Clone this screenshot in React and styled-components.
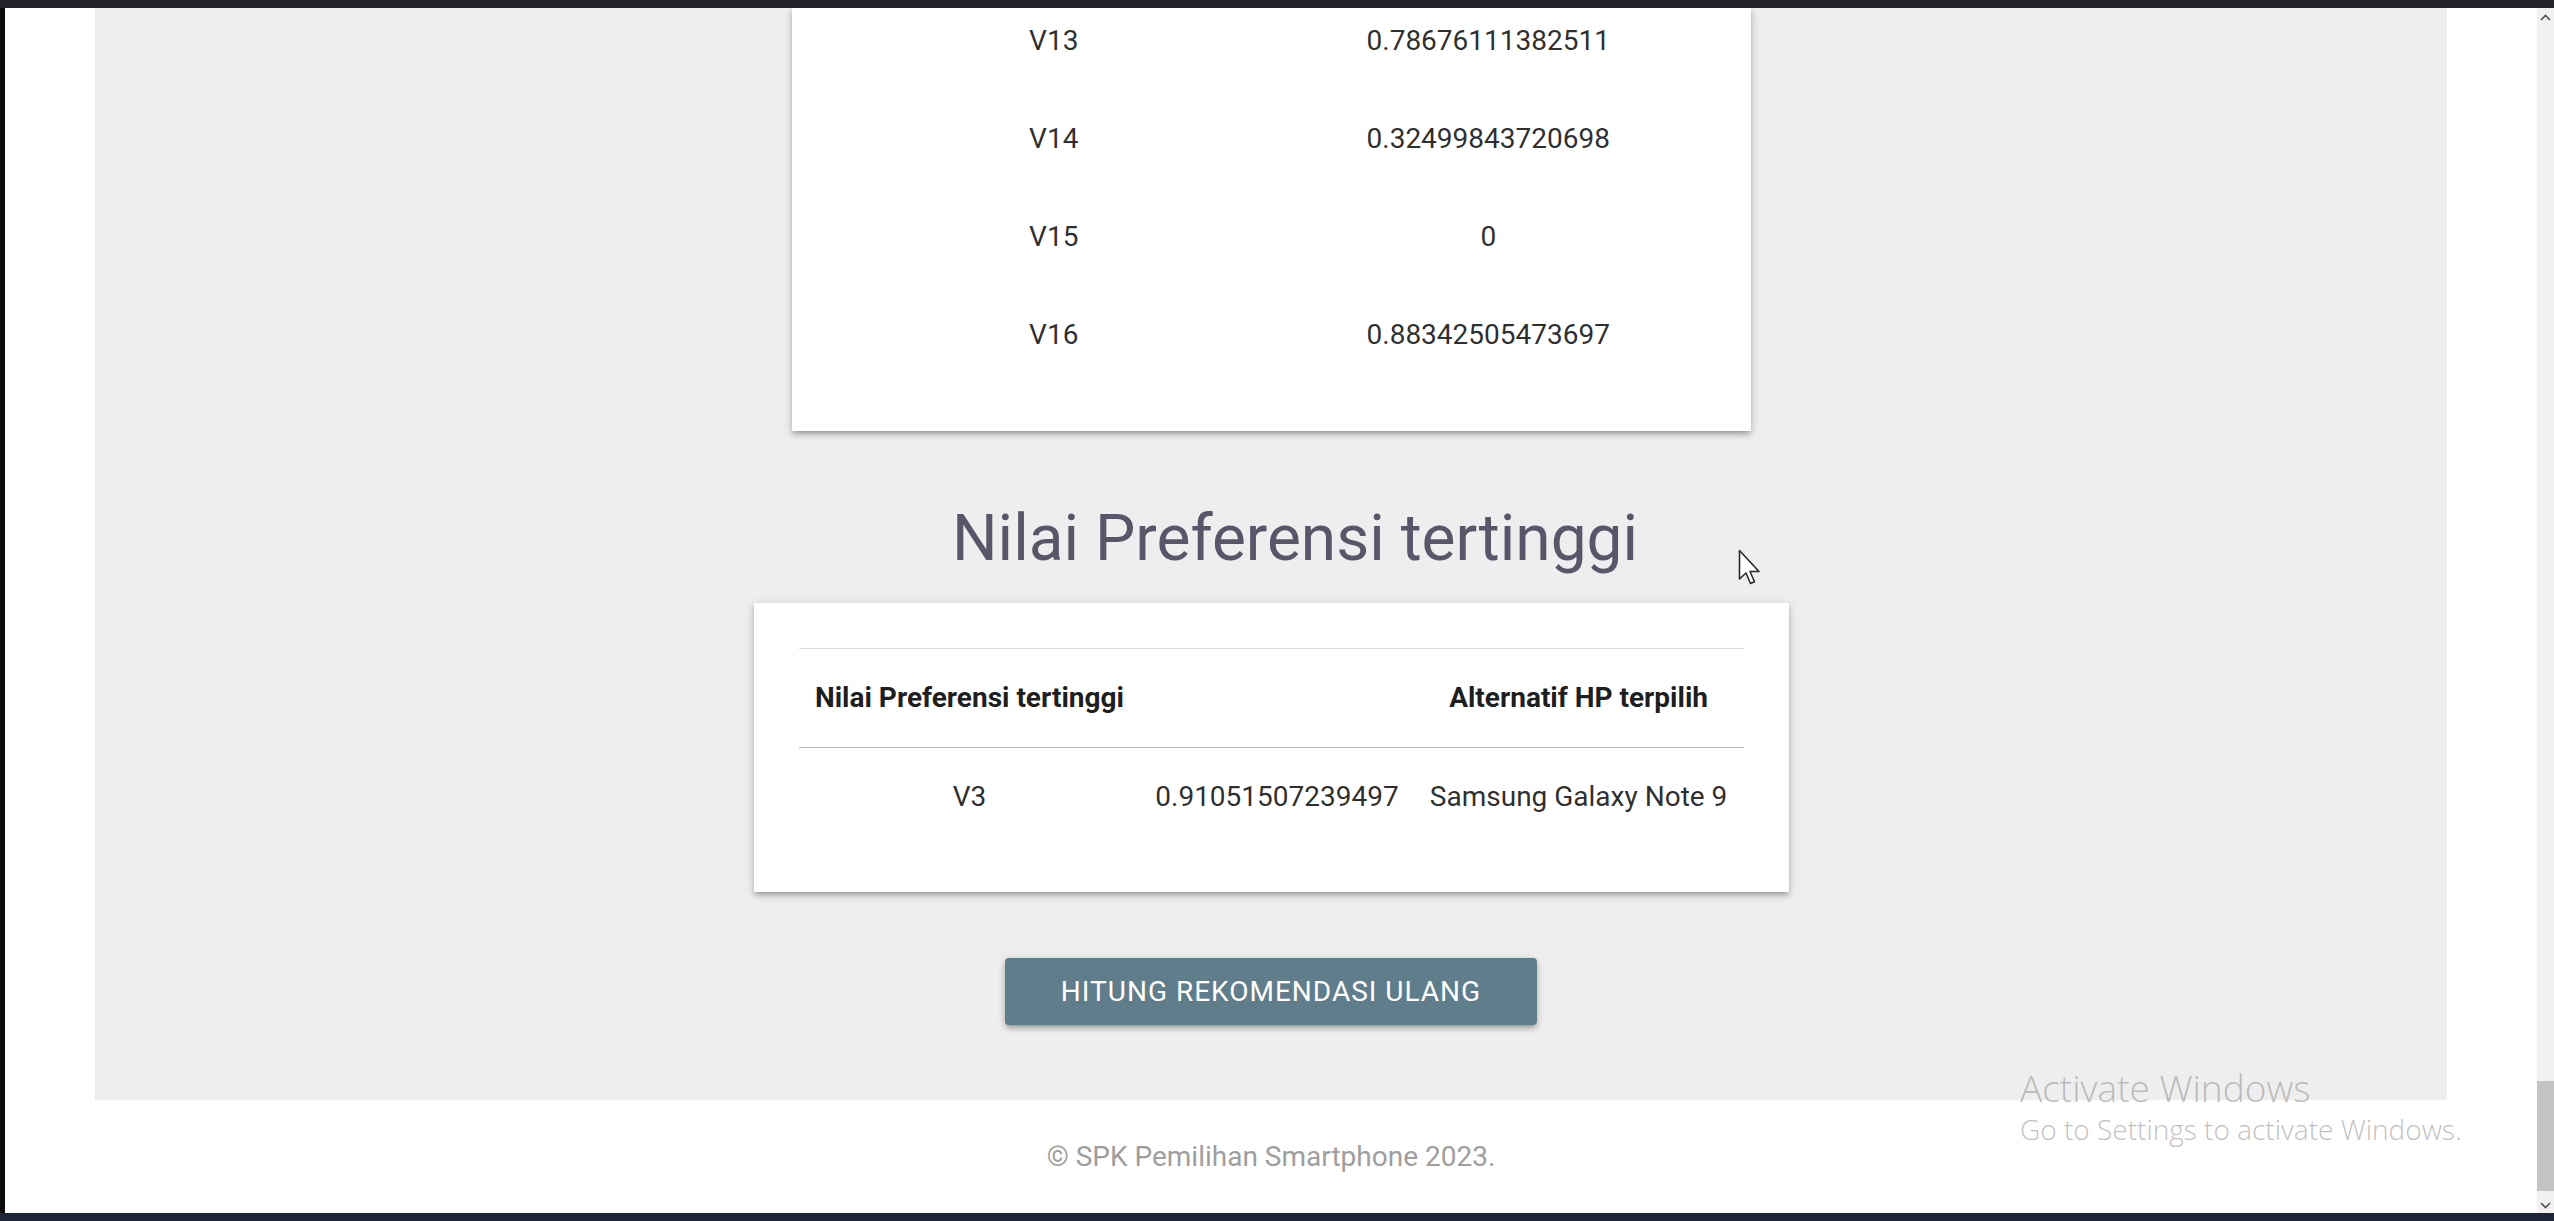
import React from 'react';
import styled, { createGlobalStyle } from 'styled-components';

const GlobalStyle = createGlobalStyle`
  html, body {
    margin: 0;
    padding: 0;
    background: #ffffff;
    overflow: hidden;
  }
  body {
    font-family: Roboto, "Liberation Sans", Arial, sans-serif;
  }
  * {
    box-sizing: border-box;
  }
`;

const Frame = styled.div`
  position: relative;
  width: 2554px;
  height: 1221px;
  display: flex;
  flex-direction: column;
  overflow: hidden;
`;

const TopBar = styled.div`
  height: 8px;
  flex: none;
  background: #232328;
`;

const BottomBar = styled.div`
  height: 8px;
  flex: none;
  background: #1c2636;
`;

const Middle = styled.div`
  flex: 1;
  display: flex;
  min-height: 0;
`;

const LeftEdge = styled.div`
  width: 5px;
  flex: none;
  background: #0b0b0d;
`;

const Page = styled.div`
  flex: 1;
  display: flex;
  flex-direction: column;
  background: #ffffff;
  min-width: 0;
`;

const Main = styled.main`
  margin: 0 90px;
  height: 1092px;
  background: #eeeeee;
  display: flex;
  flex-direction: column;
  align-items: center;
  overflow: hidden;
`;

const Card = styled.div`
  width: ${({ width }) => width}px;
  background: #ffffff;
  padding: ${({ clipped }) => (clipped ? '0 45px 47px' : '45px 45px 46px')};
  box-shadow: 0 4px 4px 0 rgba(0, 0, 0, 0.14), 0 5px 2px -4px rgba(0, 0, 0, 0.12),
    0 2px 9px 0 rgba(0, 0, 0, 0.2);
  flex: none;
`;

const Table = styled.table`
  width: 100%;
  border-collapse: collapse;
  table-layout: ${({ fixed }) => (fixed ? 'fixed' : 'auto')};
  font-size: 28px;
  line-height: 42px;
  color: rgba(0, 0, 0, 0.84);
`;

const Cell = styled.td`
  padding: ${({ first }) => (first ? '12px 9px 28px' : '28px 9px')};
  text-align: center;
  vertical-align: middle;
`;

const HeadRow = styled.tr`
  border-top: 1px solid rgba(0, 0, 0, 0.14);
  border-bottom: 1px solid rgba(0, 0, 0, 0.14);
`;

const HeadCell = styled.th`
  padding: 28px 9px;
  text-align: center;
  font-weight: 700;
  white-space: nowrap;
  color: rgba(0, 0, 0, 0.9);
`;

const Heading = styled.h4`
  margin: 71px 0 28px;
  padding-left: 48px;
  font-size: 64px;
  font-weight: 400;
  line-height: 73px;
  color: #59566a;
  white-space: nowrap;
`;

const Button = styled.button`
  margin-top: 66px;
  height: 67px;
  padding: 0 56px;
  border: none;
  border-radius: 4px;
  background: #607d8b;
  color: #ffffff;
  font-family: Roboto, "Liberation Sans", Arial, sans-serif;
  font-size: 28px;
  letter-spacing: 1px;
  text-transform: uppercase;
  box-shadow: 0 4px 4px 0 rgba(0, 0, 0, 0.14), 0 5px 2px -4px rgba(0, 0, 0, 0.12),
    0 2px 9px 0 rgba(0, 0, 0, 0.2);
  cursor: pointer;
  flex: none;
`;

const Footer = styled.footer`
  flex: 1;
  display: flex;
  align-items: center;
  justify-content: center;
  color: #9e9e9e;
  font-size: 28px;
`;

const Scrollbar = styled.div`
  width: 17px;
  flex: none;
  background: #f1f1f1;
  display: flex;
  flex-direction: column;
  justify-content: space-between;
  align-items: center;
  padding: 6px 0 4px;
`;

const ScrollTrack = styled.div`
  flex: 1;
  width: 100%;
  display: flex;
  flex-direction: column;
  justify-content: flex-end;
  padding: 0 0 11px;
`;

const Thumb = styled.div`
  height: 110px;
  width: 100%;
  background: #c4c4c4;
`;

const Watermark = styled.div`
  position: absolute;
  left: 2020px;
  top: 1066px;
  font-family: "Open Sans", "Noto Sans", sans-serif;
  font-weight: 300;
  color: rgba(150, 150, 150, 0.6);
  line-height: 1.2;
  pointer-events: none;
`;

const WatermarkTitle = styled.div`
  font-size: 37px;
`;

const WatermarkText = styled.div`
  font-size: 28px;
  margin-top: 3px;
`;

const Pointer = styled.svg`
  position: absolute;
  left: 1738px;
  top: 549px;
`;

const rows = [
  ['V13', '0.78676111382511'],
  ['V14', '0.32499843720698'],
  ['V15', '0'],
  ['V16', '0.88342505473697'],
];

const Chevron = ({ up }) => (
  <svg width="11" height="7" viewBox="0 0 11 7">
    <polyline
      points={up ? '1,6 5.5,1.5 10,6' : '1,1 5.5,5.5 10,1'}
      fill="none"
      stroke="#505050"
      strokeWidth="1.6"
    />
  </svg>
);

const App = () => {
  return (
    <Frame>
      <GlobalStyle />
      <TopBar />
      <Middle>
        <LeftEdge />
        <Page>
          <Main>
            <Card width={959} clipped>
              <Table fixed>
                <tbody>
                  {rows.map(([v, n], i) => (
                    <tr key={v}>
                      <Cell first={i === 0}>{v}</Cell>
                      <Cell first={i === 0}>{n}</Cell>
                    </tr>
                  ))}
                </tbody>
              </Table>
            </Card>
            <Heading>Nilai Preferensi tertinggi</Heading>
            <Card width={1035}>
              <Table>
                <thead>
                  <HeadRow>
                    <HeadCell>Nilai Preferensi tertinggi</HeadCell>
                    <HeadCell></HeadCell>
                    <HeadCell>Alternatif HP terpilih</HeadCell>
                  </HeadRow>
                </thead>
                <tbody>
                  <tr>
                    <Cell>V3</Cell>
                    <Cell>0.91051507239497</Cell>
                    <Cell>Samsung Galaxy Note 9</Cell>
                  </tr>
                </tbody>
              </Table>
            </Card>
            <Button>Hitung Rekomendasi Ulang</Button>
          </Main>
          <Footer>© SPK Pemilihan Smartphone 2023.</Footer>
        </Page>
        <Scrollbar>
          <Chevron up />
          <ScrollTrack>
            <Thumb />
          </ScrollTrack>
          <Chevron />
        </Scrollbar>
      </Middle>
      <BottomBar />
      <Watermark>
        <WatermarkTitle>Activate Windows</WatermarkTitle>
        <WatermarkText>Go to Settings to activate Windows.</WatermarkText>
      </Watermark>
      <Pointer width="24" height="37" viewBox="0 0 24 37">
        <path
          d="M1.5 1.5 L1.5 30 L8 24 L12.5 34.5 L16.5 32.8 L12 22.5 L21 22.5 Z"
          fill="#ffffff"
          stroke="#2a2a2a"
          strokeWidth="1.6"
          strokeLinejoin="round"
        />
      </Pointer>
    </Frame>
  );
};

export default App;
